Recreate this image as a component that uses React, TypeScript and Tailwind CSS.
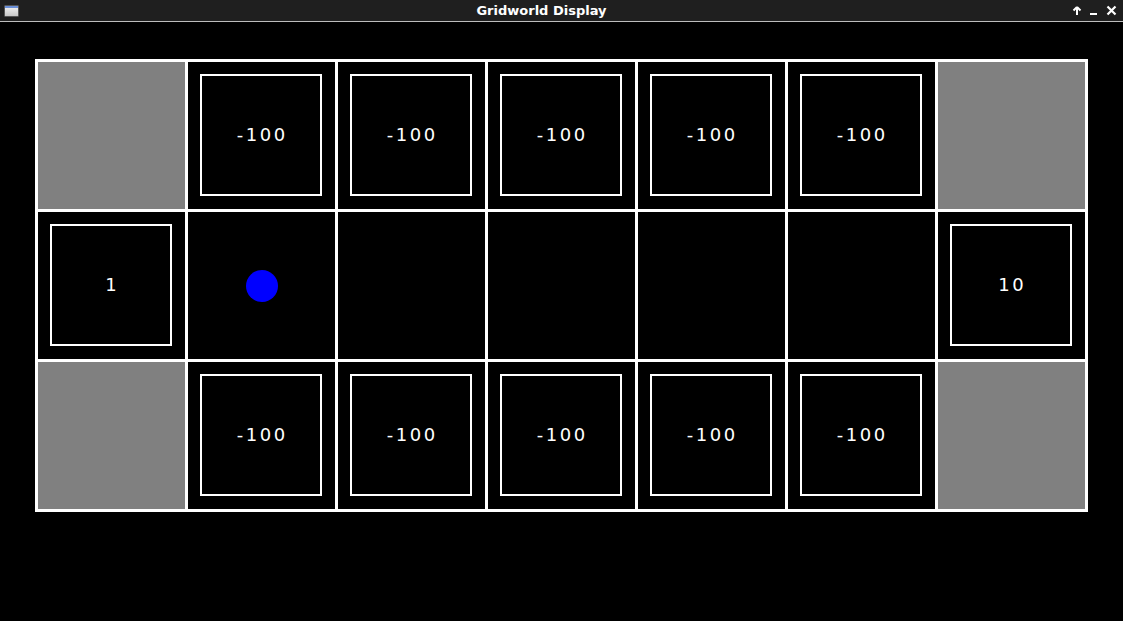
import React from "react";

type Cell = { kind: "gray" } | { kind: "box"; label: string } | { kind: "empty"; agent?: boolean };

const rows: Cell[][] = [
  [
    { kind: "gray" },
    { kind: "box", label: "-100" },
    { kind: "box", label: "-100" },
    { kind: "box", label: "-100" },
    { kind: "box", label: "-100" },
    { kind: "box", label: "-100" },
    { kind: "gray" },
  ],
  [
    { kind: "box", label: "1" },
    { kind: "empty", agent: true },
    { kind: "empty" },
    { kind: "empty" },
    { kind: "empty" },
    { kind: "empty" },
    { kind: "box", label: "10" },
  ],
  [
    { kind: "gray" },
    { kind: "box", label: "-100" },
    { kind: "box", label: "-100" },
    { kind: "box", label: "-100" },
    { kind: "box", label: "-100" },
    { kind: "box", label: "-100" },
    { kind: "gray" },
  ],
];

function CellView({ c }: { c: Cell }) {
  if (c.kind === "gray") return <div className="w-[147px] h-[147px] bg-[#808080]" />;
  if (c.kind === "box")
    return (
      <div className="w-[147px] h-[147px] bg-black pt-[12px] pl-[12px]">
        <div className="w-[122px] h-[122px] border-2 border-white flex items-center justify-center">
          <span className="text-white text-[18px] tracking-[2.5px] pl-[2.5px] leading-none font-['DejaVu_Sans',sans-serif]">
            {c.label}
          </span>
        </div>
      </div>
    );
  return (
    <div className="w-[147px] h-[147px] bg-black flex items-center justify-center">
      {c.agent && <div className="w-[32px] h-[32px] rounded-full bg-[#0000ff]" />}
    </div>
  );
}

export default function App() {
  return (
    <div className="w-[1123px] h-[621px] bg-black flex flex-col overflow-hidden font-['DejaVu_Sans',sans-serif]">
      <div className="h-[22px] bg-[#1f1f1f] border-b border-[#bdbdbd] flex items-center relative shrink-0">
        <div className="ml-[4px] w-[15px] h-[12px] rounded-[1px] border border-[#555] bg-gradient-to-b from-[#f4f4f4] to-[#c8c8c8] relative overflow-hidden">
          <div className="absolute top-0 left-0 right-0 h-[2px] bg-[#6a8fd8]" />
        </div>
        <div className="absolute left-0 right-[40px] top-0 h-[21px] flex items-center justify-center text-white text-[13px] font-bold">
          Gridworld Display
        </div>
        <div className="ml-auto mr-[6px] flex items-center gap-[7px] text-white relative">
          <svg width="10" height="10" viewBox="0 0 10 10">
            <path d="M5 1 L1.5 4.5 M5 1 L8.5 4.5 M5 1 L5 9" stroke="white" strokeWidth="2" fill="none" />
          </svg>
          <svg width="10" height="10" viewBox="0 0 10 10">
            <rect x="1" y="7" width="7" height="2" fill="white" />
          </svg>
          <svg width="11" height="11" viewBox="0 0 11 11">
            <path d="M1.5 1.5 L9.5 9.5 M9.5 1.5 L1.5 9.5" stroke="white" strokeWidth="2.2" fill="none" />
          </svg>
        </div>
      </div>
      <div className="pl-[35px] pt-[37px]">
        <div className="grid grid-cols-[repeat(7,147px)] gap-[3px] p-[3px] bg-white w-fit">
          {rows.flat().map((c, i) => (
            <CellView key={i} c={c} />
          ))}
        </div>
      </div>
    </div>
  );
}
